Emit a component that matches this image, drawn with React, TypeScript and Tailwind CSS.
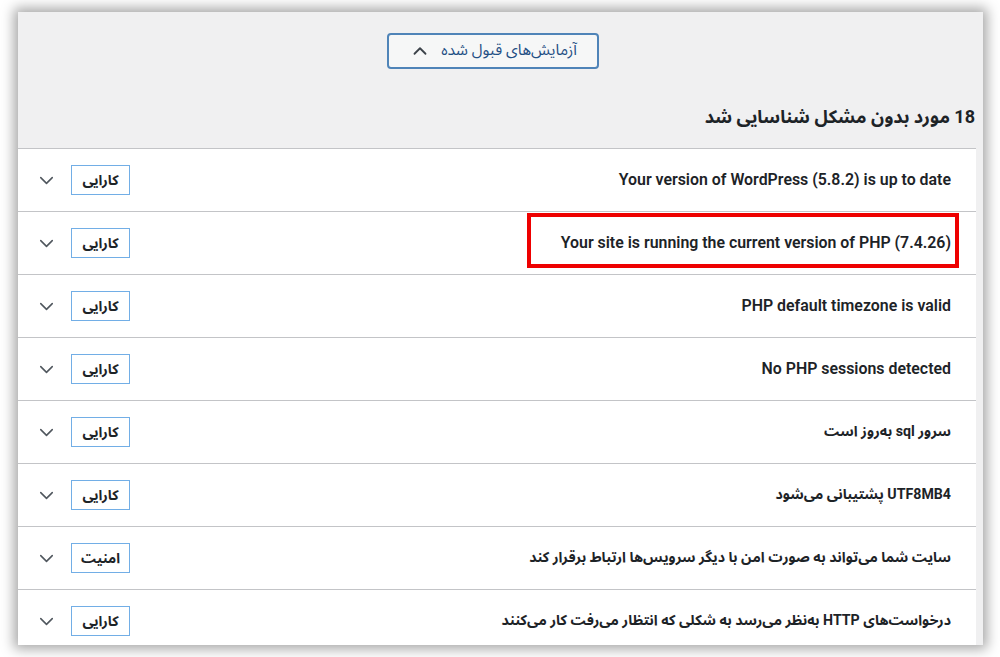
import { ChevronDown, ChevronUp } from "lucide-react";

const rows = [
  { title: "Your version of WordPress (5.8.2) is up to date", badge: "کارایی" },
  { title: "Your site is running the current version of PHP (7.4.26)", badge: "کارایی", marked: true },
  { title: "PHP default timezone is valid", badge: "کارایی" },
  { title: "No PHP sessions detected", badge: "کارایی" },
  { title: "سرور sql به‌روز است", badge: "کارایی", fa: true },
  { title: "UTF8MB4 پشتیبانی می‌شود", badge: "کارایی", fa: true },
  { title: "سایت شما می‌تواند به صورت امن با دیگر سرویس‌ها ارتباط برقرار کند", badge: "امنیت", fa: true },
  { title: "درخواست‌های HTTP به‌نظر می‌رسد به شکلی که انتظار می‌رفت کار می‌کنند", badge: "کارایی", fa: true },
];

export default function App() {
  return (
    <div
      className="w-[1000px] h-[657px] bg-white overflow-hidden pt-[12px] pl-[18px]"
      style={{ fontFamily: "Roboto, 'Noto Sans Arabic', 'Noto Naskh Arabic', 'DejaVu Sans', sans-serif" }}
    >
      <div className="w-[965px] h-[633px] bg-[#f0f0f1] overflow-hidden shadow-[0_0_12px_4px_rgba(0,0,0,0.35)] pr-[7px]">
        {/* accordion toggle */}
        <div className="flex justify-center pt-[21px] pr-[8px]">
          <button
            dir="rtl"
            className="w-[212px] h-[36px] flex items-center justify-center gap-[10px] border-2 border-[#4f84b8] rounded-[4px] bg-[#f6f7f7] text-[#1f4f84] text-[15.5px]"
          >
            <span>آزمایش‌های قبول شده</span>
            <ChevronUp className="w-[22px] h-[22px] text-[#3c434a]" strokeWidth={2} />
          </button>
        </div>

        <h2 dir="rtl" className="mt-[33px] mb-[17px] pr-[1px] text-[18px] font-bold text-[#1d2327] leading-[29px]">
          18 مورد بدون مشکل شناسایی شد
        </h2>

        <div className="bg-white border-t border-[#c3c4c7]">
          {rows.map((r, i) => (
            <div
              key={i}
              className="relative h-[63px] border-b border-[#c3c4c7] flex items-center justify-between pl-[17px] pr-[25px]"
            >
              <div className="flex items-center gap-[13px]">
                <ChevronDown className="w-[23px] h-[23px] text-[#50575e]" strokeWidth={1.6} />
                <span
                  dir="rtl"
                  className="w-[59px] h-[30px] flex items-center justify-center border border-[#72aee6] text-[14px] font-bold text-[#1d2327]"
                >
                  {r.badge}
                </span>
              </div>
              <span
                dir="rtl"
                className={`${r.fa ? "text-[14.2px] font-bold" : "text-[15.9px] font-semibold"} text-[#1d2327]`}
              >
                {r.title}
              </span>
              {r.marked && (
                <div className="absolute right-[17px] top-[1px] w-[432px] h-[55px] border-[4px] border-[#ee0000]" />
              )}
            </div>
          ))}
        </div>
      </div>
    </div>
  );
}
